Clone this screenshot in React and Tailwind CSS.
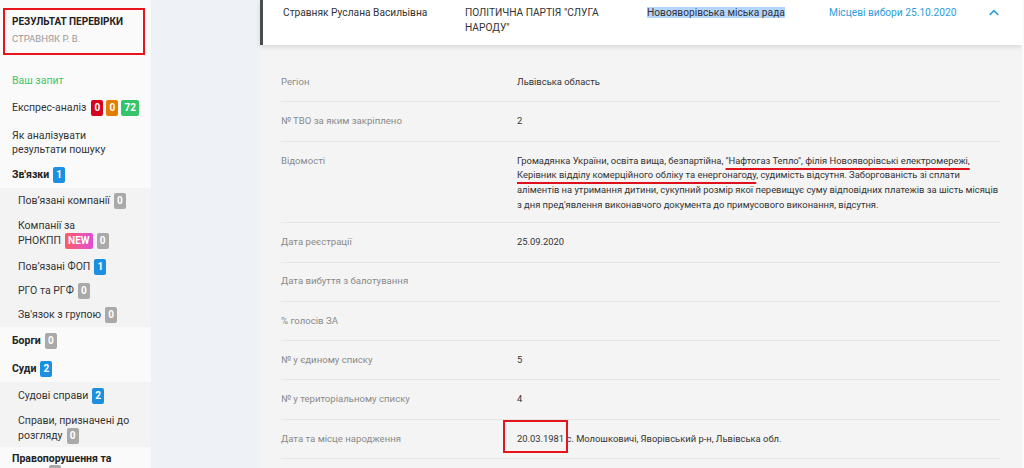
import React from 'react';

const font = { fontFamily: 'Roboto, "Noto Sans", sans-serif' };

function Badge({ children, color = 'gray' }) {
  const colors = {
    gray: 'bg-[#a9a9a9]',
    blue: 'bg-[#1b8fe0]',
    red: 'bg-[#d5031e]',
    orange: 'bg-[#e37d00]',
    green: 'bg-[#35c46a]',
  };
  return (
    <span className={`inline-flex shrink-0 items-center justify-center h-[16px] min-w-[12px] px-[3px] rounded-[2px] text-[10px] font-bold text-white leading-none align-middle ${colors[color]}`}>
      {children}
    </span>
  );
}

function NewBadge() {
  return (
    <span className="inline-flex shrink-0 items-center justify-center h-[16px] px-[3px] rounded-[2px] text-[10px] font-bold text-white leading-none bg-gradient-to-r from-[#ff5a5f] to-[#e04ad8]">
      NEW
    </span>
  );
}

function Sidebar() {
  return (
    <aside className="w-[152px] shrink-0 bg-[#fafafa] border-r border-[#f0f0f0] text-[10.5px] text-[#333] leading-[14px] whitespace-nowrap">
      <div className="ml-[3px] mt-[8px] w-[142px] h-[47px] border-2 border-[#e8141b] pl-[7px] pt-[5px]">
        <div className="text-[10px] font-bold text-[#222] uppercase leading-[14px]">Результат перевірки</div>
        <div className="text-[9.5px] text-[#999] uppercase leading-[14px] mt-[3px]">Стравняк Р. В.</div>
      </div>
      <div className="h-[15px]" />
      <div className="h-[22px] flex items-center pl-[12px] text-[#3cc46b]">Ваш запит</div>
      <div className="h-[32px] flex items-center pl-[12px] gap-[3px]">
        <span className="mr-[2px]">Експрес-аналіз</span>
        <Badge color="red">0</Badge>
        <Badge color="orange">0</Badge>
        <Badge color="green">72</Badge>
      </div>
      <div className="h-[38px] flex items-center pl-[12px]">Як аналізувати<br />результати пошуку</div>
      <div className="h-[26px] flex items-center pl-[12px] gap-[4px] font-bold text-[#222]">
        Зв'язки <Badge color="blue">1</Badge>
      </div>
      <div className="bg-[#f3f3f3] pl-[18px]">
        <div className="h-[26px] flex items-center gap-[4px]">Пов’язані компанії <Badge>0</Badge></div>
        <div className="h-[40px] flex flex-col justify-center">
          <div>Компанії за</div>
          <div className="flex items-center gap-[4px]">РНОКПП <NewBadge /> <Badge>0</Badge></div>
        </div>
        <div className="h-[25px] flex items-center gap-[4px]">Пов’язані ФОП <Badge color="blue">1</Badge></div>
        <div className="h-[24px] flex items-center gap-[4px]">РГО та РГФ <Badge>0</Badge></div>
        <div className="h-[24px] flex items-center gap-[4px]">Зв'язок з групою <Badge>0</Badge></div>
      </div>
      <div className="h-[28px] flex items-center pl-[12px] gap-[4px] font-bold text-[#222]">
        Борги <Badge>0</Badge>
      </div>
      <div className="h-[27px] flex items-center pl-[12px] gap-[4px] font-bold text-[#222]">
        Суди <Badge color="blue">2</Badge>
      </div>
      <div className="bg-[#f3f3f3] pl-[18px]">
        <div className="h-[28px] flex items-center gap-[4px]">Судові справи <Badge color="blue">2</Badge></div>
        <div className="h-[37px] flex flex-col justify-center">
          <div>Справи, призначені до</div>
          <div className="flex items-center gap-[4px]">розгляду <Badge>0</Badge></div>
        </div>
      </div>
      <div className="pl-[12px] pt-[5px] font-bold text-[#222]">
        <div>Правопорушення та</div>
        <div className="flex items-center gap-[4px] h-[14px]">КУпАП <Badge>0</Badge></div>
      </div>
    </aside>
  );
}

function Row({ label, children, tall }) {
  return (
    <div className={`flex border-b border-[#e6e6e6] ${tall ? 'pt-[12px] pb-[10px]' : 'h-[39.3px] items-center'}`}>
      <div className="w-[236px] shrink-0 text-[9.6px] text-[#8a8a8a] leading-[14.67px]">{label}</div>
      <div className="flex-1 text-[9.4px] text-[#333] leading-[14.67px]">{children}</div>
    </div>
  );
}

function Main() {
  return (
    <main className="flex-1 bg-[#f4f4f4]">
      <div className="bg-white border-l-[3px] border-[#4d4d4d] shadow-[0_2px_5px_rgba(0,0,0,0.12)] h-[45px] pl-[20px] pt-[5px] flex text-[10.2px] leading-[15px] text-[#333]">
        <div className="w-[182px]">Стравняк Руслана Васильівна</div>
        <div className="w-[182px] pr-[30px]">ПОЛІТИЧНА ПАРТІЯ "СЛУГА НАРОДУ"</div>
        <div className="w-[182px]">
          <span className="bg-[#b4d5fe]">Новояворівська міська рада</span>
        </div>
        <div className="w-[160px] text-[#2e9ddb]">Місцеві вибори 25.10.2020</div>
        <div className="pt-[4px]">
          <svg width="10" height="7" viewBox="0 0 10 7" fill="none">
            <path d="M1.2 5.5 5 1.7l3.8 3.8" stroke="#2e9ddb" strokeWidth="1.7" strokeLinecap="round" strokeLinejoin="round" />
          </svg>
        </div>
      </div>
      <div className="pl-[21px] pr-[22px] pt-[18px]">
        <Row label="Регіон">Львівська область</Row>
        <Row label="№ ТВО за яким закріплено">2</Row>
        <Row label="Відомості" tall>
          Громадянка України, освіта вища, безпартійна,{' '}
          <span className="underline decoration-[#e0111b] decoration-2 underline-offset-[4px]">
            "Нафтогаз Тепло", філія Новояворівські електромережі, Керівник відділу комерційного обліку та енергонагоду
          </span>
          , судимість відсутня. Заборгованість зі сплати аліментів на утримання дитини, сукупний розмір якої перевищує суму відповідних платежів за шість місяців з дня пред'явлення виконавчого документа до примусового виконання, відсутня.
        </Row>
        <Row label="Дата реєстрації">25.09.2020</Row>
        <Row label="Дата вибуття з балотування" />
        <Row label="% голосів ЗА" />
        <Row label="№ у єдиному списку">5</Row>
        <Row label="№ у територіальному списку">4</Row>
        <Row label="Дата та місце народження">
          <span className="relative">
            20.03.1981
            <span className="absolute left-[-14px] right-[-4px] top-[-13px] bottom-[-9px] border-2 border-[#e8141b]" />
          </span>{' '}
          с. Молошковичі, Яворівський р-н, Львівська обл.
        </Row>
      </div>
    </main>
  );
}

export default function App() {
  return (
    <div className="flex w-[1024px] h-[468px] overflow-hidden" style={font}>
      <Sidebar />
      <div className="w-[108px] shrink-0 bg-[#eef1f6]" />
      <Main />
      <div className="w-[2px] shrink-0 bg-[#fafafa]" />
    </div>
  );
}
